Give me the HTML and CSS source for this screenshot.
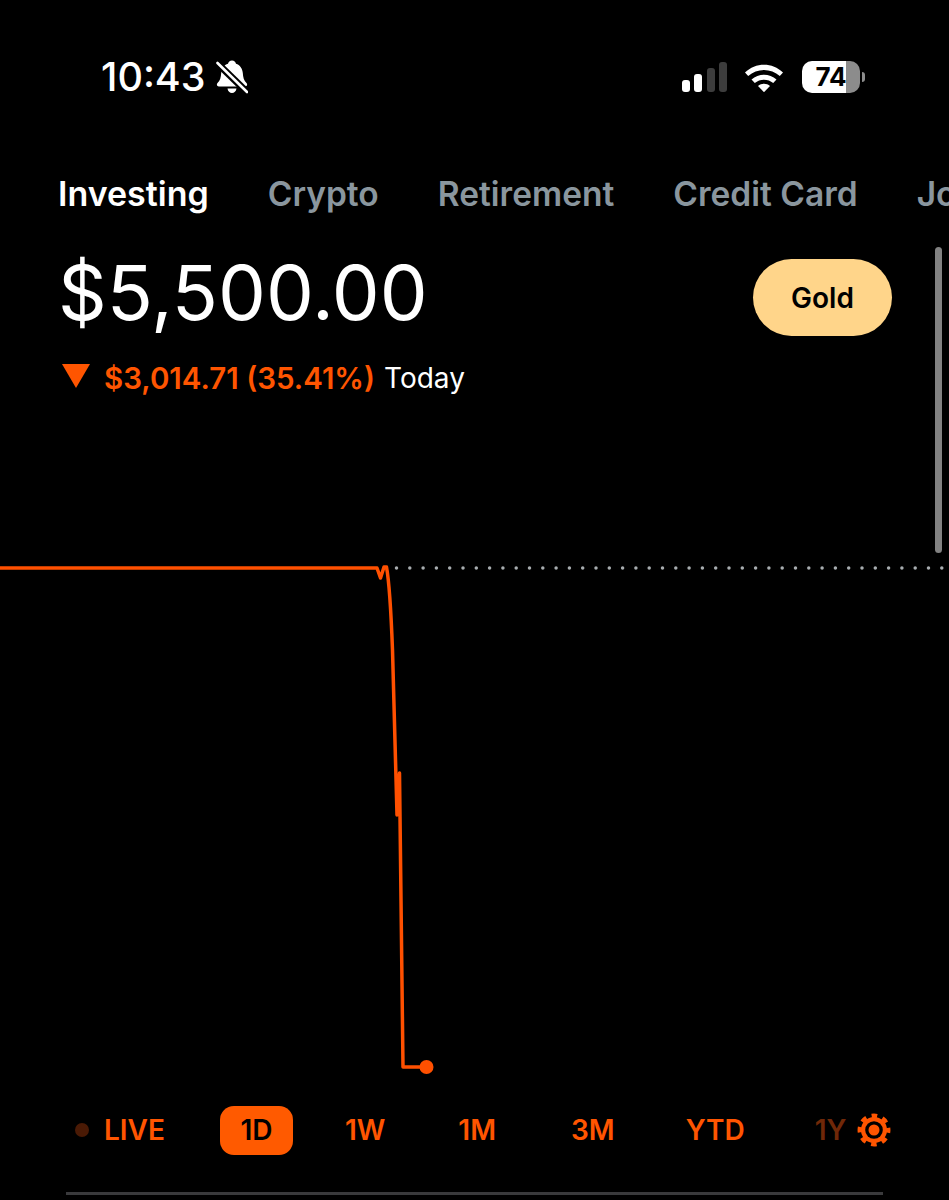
FILE: index.html
```html
<!DOCTYPE html>
<html lang="en">
<head>
<meta charset="utf-8">
<title>Investing</title>
<link rel="stylesheet" href="styles.css">
</head>
<body>
<main class="screen">
  <header class="status">
    <div class="status-left">
      <span class="time">10:43</span>
      <svg class="bell" viewBox="0 0 32 34" aria-hidden="true">
        <path class="bell-fill" d="M16 .5c-2.200 0-3.600 1.400-4 3.200C8 5 5.500 8.500 5.200 13c-.3 4.500-1 7.500-3.700 10-1.200 1.200-.7 3.500 1.300 3.500h26.400c2 0 2.500-2.300 1.300-3.500-2.700-2.500-3.400-5.500-3.700-10C26.500 8.500 24 5 20 3.700 19.600 1.900 18.200.5 16 .5zM11.500 28.500c.4 2.800 2.300 4.500 4.500 4.500s4.100-1.700 4.500-4.500z"/>
        <path class="bell-gap" d="M-1 1 33 34"/>
        <path class="bell-slash" d="M1.500 3 31 32"/>
      </svg>
    </div>
    <div class="status-right">
      <svg class="signal" viewBox="0 0 46 32" aria-hidden="true">
        <rect class="on" x="1" y="19" width="8" height="12" rx="3"/>
        <rect class="on" x="13" y="13" width="8" height="18" rx="3"/>
        <rect class="off" x="26" y="7" width="8" height="24" rx="3"/>
        <rect class="off" x="38" y="1" width="8" height="30" rx="3"/>
      </svg>
      <svg class="wifi" viewBox="0 0 40 30" aria-hidden="true">
        <path d="M1 10.500C11.500 0 28.500 0 39 10.500l-3.200 3.600C27 5.800 13 5.800 4.200 14.100z"/>
        <path d="M7.500 17.500c7-6.500 18-6.500 25 0l-3.300 3.500c-5-4.500-13.400-4.500-18.400 0z"/>
        <path d="M14 24c3.300-3 8.700-3 12 0l-6 6.200z"/>
      </svg>
      <div class="battery">
        <div class="battery-body"><span class="battery-level">74</span></div>
        <span class="battery-cap"></span>
      </div>
    </div>
  </header>

  <nav class="tabs">
    <span class="tab tab-active">Investing</span>
    <span class="tab">Crypto</span>
    <span class="tab">Retirement</span>
    <span class="tab">Credit Card</span>
    <span class="tab">Joint</span>
  </nav>

  <section class="summary">
    <div class="balance-row">
      <h1 class="balance">$5,500.00</h1>
      <button class="gold">Gold</button>
    </div>
    <div class="change">
      <svg class="down" viewBox="0 0 28 24" aria-hidden="true"><path d="M0 0h28L14 24z"/></svg>
      <span class="change-value">$3,014.71 (35.41%)</span>
      <span class="change-label">Today</span>
    </div>
  </section>

  <svg class="chart" viewBox="0 0 949 680" aria-hidden="true">
    <line class="baseline" x1="396.500" y1="148" x2="949" y2="148"/>
    <path class="trace" d="M0 148H377L380.500 158 384 147 386.500 147C388.500 158 391 190 392.500 230L397 395 399.500 353 403 647H426"/>
    <circle class="dot" cx="426.500" cy="647" r="7"/>
  </svg>

  <div class="ranges">
    <span class="live-dot"></span>
    <span class="range range-live">LIVE</span>
    <span class="range range-active">1D</span>
    <span class="range range-1w">1W</span>
    <span class="range range-1m">1M</span>
    <span class="range range-3m">3M</span>
    <span class="range range-ytd">YTD</span>
    <span class="range range-1y">1Y</span>
    <svg class="gear" viewBox="0 0 34 34" aria-hidden="true">
      <circle class="gear-teeth" cx="17" cy="17" r="14.200"/>
      <circle class="gear-body" cx="17" cy="17" r="13"/>
      <circle class="gear-hole" cx="17" cy="17" r="8.800"/>
      <circle class="gear-core" cx="17" cy="17" r="5.500"/>
    </svg>
  </div>

  <div class="divider"></div>
  <div class="scrollbar"></div>
</main>
</body>
</html>
```
FILE: styles.css
```css
* { box-sizing: border-box; }
html, body { margin: 0; padding: 0; background: #000; }
body { font-family: Inter, "Liberation Sans", sans-serif; color: #fff; }

.screen {
  position: relative;
  width: 949px;
  height: 1200px;
  overflow: hidden;
  background: #000;
}

/* status bar */
.status {
  display: flex;
  justify-content: space-between;
  align-items: center;
  height: 50px;
  margin-top: 52px;
  padding: 0 84px 0 101px;
}
.status-left { display: flex; align-items: center; gap: 10px; }
.time { font-size: 39.500px; font-weight: 500; line-height: 50px; }
.bell { width: 32px; height: 34px; overflow: hidden; }
.bell-fill { fill: #fff; }
.bell-gap { stroke: #000; stroke-width: 7; fill: none; }
.bell-slash { stroke: #fff; stroke-width: 2.600; fill: none; stroke-linecap: round; }
.status-right { display: flex; align-items: center; }
.signal { width: 46px; height: 32px; margin-right: 17px; }
.signal .on { fill: #fff; }
.signal .off { fill: #3d3d3d; }
.wifi { width: 40px; height: 30px; fill: #fff; margin-right: 18px; }
.battery { display: flex; align-items: center; gap: 2px; }
.battery-body {
  width: 58px;
  height: 32px;
  border-radius: 10px;
  background: linear-gradient(90deg, #fff 0 76%, #8c8c8c 76%);
  display: flex;
  align-items: center;
  justify-content: center;
}
.battery-level { color: #000; font-size: 26px; font-weight: 700; line-height: 32px; }
.battery-cap { width: 3px; height: 10px; border-radius: 0 3px 3px 0; background: #8c8c8c; }

/* tabs */
.tabs {
  display: flex;
  gap: 59px;
  margin-top: 69px;
  padding-left: 58px;
  white-space: nowrap;
}
.tab { font-size: 33.500px; font-weight: 600; line-height: 46px; color: #8a969e; flex: none; }
.tab-active { color: #fff; font-size: 34px; }

/* summary */
.summary { padding: 0 57px 0 58px; margin-top: 39px; }
.balance-row { display: flex; justify-content: space-between; align-items: center; height: 82px; }
.balance { margin: 0 0 10px; font-size: 76px; font-weight: 400; line-height: 82px; }
.gold {
  width: 139px;
  height: 77px;
  border: 0;
  border-radius: 39px;
  background: #ffd58a;
  color: #000;
  font: 600 28px/79px Inter, "Liberation Sans", sans-serif;
  padding: 0;
}
.change { display: flex; align-items: center; margin-top: 20px; height: 40px; font-size: 28px; }
.down { width: 28px; height: 24px; fill: #ff5500; margin: 0 14px 4px 4px; flex: none; }
.change-value { color: #ff5500; font-size: 29.500px; font-weight: 600; }
.change-label { color: #fff; margin-left: 9px; }

/* chart */
.chart { display: block; width: 949px; height: 680px; margin-top: 22px; }
.baseline { stroke: #a8adb0; stroke-width: 3.500; stroke-linecap: round; stroke-dasharray: 0 13.300; }
.trace { fill: none; stroke: #ff5000; stroke-width: 3.500; stroke-linejoin: round; }
.dot { fill: #ff5000; }

/* range selector */
.ranges { display: flex; align-items: center; height: 50px; margin-top: 5px; padding-left: 75px; white-space: nowrap; }
.live-dot { width: 14px; height: 14px; border-radius: 50%; background: #4a1a05; margin-right: 15px; flex: none; }
.range { font-size: 28px; font-weight: 600; color: #ff5500; line-height: 50px; flex: none; }
.range-active {
  width: 73px;
  height: 49px;
  margin-left: 55px;
  border-radius: 14px;
  background: #ff5a00;
  color: #000;
  text-align: center;
  line-height: 49px;
}
.range-1w { margin-left: 52px; }
.range-1m { margin-left: 73px; }
.range-3m { margin-left: 75px; }
.range-ytd { margin-left: 71px; }
.range-1y { margin-left: 70px; color: #702808; }
.gear { width: 34px; height: 34px; margin-left: 10px; flex: none; }
.gear-teeth { fill: none; stroke: #ff5500; stroke-width: 4.500; stroke-dasharray: 5.600 5.550; stroke-dashoffset: 2.800; }
.gear-body { fill: #ff5500; }
.gear-hole { fill: #000; }
.gear-core { fill: #ff5500; }

.divider { height: 3px; margin: 37px 66px 0; background: #3a3a3c; }

/* scrollbar overlay */
.scrollbar {
  position: absolute;
  left: 935px;
  top: 247px;
  width: 7px;
  height: 306px;
  border-radius: 4px;
  background: #828282;
}
```
